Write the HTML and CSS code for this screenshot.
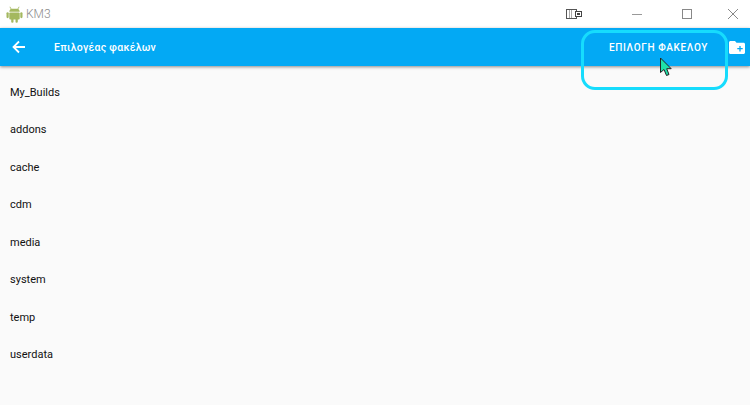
FILE: index.html
```html
<!DOCTYPE html>
<html lang="en">
<head>
    <meta charset="UTF-8">
    <title>KM3</title>
    <link rel="stylesheet" href="styles.css">
</head>
<body>
    <div class="window">
        <div class="titlebar">
            <svg class="android" width="17" height="18" viewBox="0 0 17 18">
                <path fill="#a4b85f" d="M4 1.500l1.500 2.200h6L13 1.500l.5.4-1.300 2.200c.9.7 1.500 1.700 1.500 2.700H3.300c0-1 .6-2 1.500-2.700L3.500 1.900z"/>
                <rect x="3.300" y="7.500" width="10.400" height="7" rx="1" fill="#a4b85f"/>
                <rect x="0.500" y="7.200" width="2.200" height="6" rx="1.100" fill="#a4b85f"/>
                <rect x="14.300" y="7.200" width="2.200" height="6" rx="1.100" fill="#a4b85f"/>
                <rect x="5.200" y="13" width="2.300" height="4.800" rx="1.100" fill="#a4b85f"/>
                <rect x="9.500" y="13" width="2.300" height="4.800" rx="1.100" fill="#a4b85f"/>
            </svg>
            <span class="app-name">KM3</span>
            <div class="win-controls">
                <svg class="win-tablet" width="16" height="10" viewBox="0 0 16 10">
                    <rect x="0.500" y="0.500" width="10" height="9" fill="#fff" stroke="#555"/>
                    <path d="M3.500 1v8M5.500 1v8" stroke="#aaa" stroke-width="1"/>
                    <rect x="9.500" y="2.500" width="6" height="5" fill="#fff" stroke="#444"/>
                    <rect x="11" y="4" width="3" height="2" fill="#444"/>
                </svg>
                <svg class="win-min" width="10" height="10" viewBox="0 0 10 10"><path d="M0 5.500h10" stroke="#999"/></svg>
                <svg class="win-max" width="10" height="10" viewBox="0 0 10 10"><rect x="0.500" y="0.500" width="9" height="9" fill="none" stroke="#888"/></svg>
                <svg class="win-close" width="10" height="10" viewBox="0 0 10 10"><path d="M0 0l10 10M10 0L0 10" stroke="#888"/></svg>
            </div>
        </div>

        <div class="appbar">
            <svg class="back" width="14" height="14" viewBox="0 0 14 14">
                <path d="M13 7H2M7 1.500L1.500 7 7 12.500" fill="none" stroke="#fff" stroke-width="1.800"/>
            </svg>
            <span class="appbar-title">Επιλογέας φακέλων</span>
            <span class="select-btn">ΕΠΙΛΟΓΗ ΦΑΚΕΛΟΥ</span>
            <svg class="new-folder" width="16" height="13" viewBox="0 0 16 13">
                <path fill="#fff" d="M1.500 0H6l1.500 1.700h7c.8 0 1.500.6 1.500 1.400v8.400c0 .8-.7 1.500-1.500 1.500h-13C.7 13 0 12.300 0 11.500v-10C0 .7.700 0 1.500 0z"/>
                <path d="M11 5v5.500M8.300 7.700h5.400" stroke="#03a9f4" stroke-width="1.300"/>
            </svg>
        </div>

        <ul class="folders">
            <li>My_Builds</li>
            <li>addons</li>
            <li>cache</li>
            <li>cdm</li>
            <li>media</li>
            <li>system</li>
            <li>temp</li>
            <li>userdata</li>
        </ul>

        <div class="ring"></div>
        <svg class="cursor" width="14" height="20" viewBox="0 0 14 20">
            <path d="M1.500 1v14.500l3.500-3 2.500 6 2.500-1-2.300-5.800h4.500z" fill="#1fe0a8" stroke="#222" stroke-width="1"/>
        </svg>
    </div>
</body>
</html>
```

FILE: styles.css
```css
html, body {
    margin: 0;
    padding: 0;
}
body {
    font-family: 'Roboto', 'Liberation Sans', sans-serif;
    background: #fafafa;
}
.window {
    position: relative;
    width: 750px;
    height: 405px;
    overflow: hidden;
}
.titlebar {
    display: flex;
    align-items: center;
    height: 28px;
    padding-left: 6px;
    background: #fff;
}
.android {
    margin-right: 3px;
}
.app-name {
    font-size: 12px;
    font-weight: 300;
    color: #8c8c8c;
}
.win-controls {
    display: flex;
    align-items: center;
    margin-left: auto;
}
.win-tablet {
    margin-right: 50px;
}
.win-min {
    margin-right: 40px;
}
.win-max {
    margin-right: 36px;
}
.win-close {
    margin-right: 12px;
}
.appbar {
    display: flex;
    align-items: center;
    height: 38px;
    padding-left: 12px;
    background: #03a9f4;
    color: #fff;
    box-shadow: 0 1px 3px rgba(0,0,0,0.45);
}
.appbar-title {
    margin-left: 28px;
    font-size: 10.5px;
    font-weight: 500;
    letter-spacing: 0.25px;
}
.select-btn {
    margin-left: auto;
    margin-right: 21px;
    font-size: 10px;
    font-weight: 500;
    letter-spacing: 0.65px;
}
.new-folder {
    margin-right: 5px;
}
.folders {
    list-style: none;
    margin: 0;
    padding: 7.5px 0 0 10px;
}
.folders li {
    display: flex;
    align-items: center;
    height: 37.5px;
    font-size: 11px;
    color: #111;
}
.ring {
    position: absolute;
    left: 581px;
    top: 30px;
    width: 141px;
    height: 54px;
    border: 3px solid #16dcfd;
    border-radius: 14px;
}
.cursor {
    position: absolute;
    left: 659px;
    top: 57px;
}
```
